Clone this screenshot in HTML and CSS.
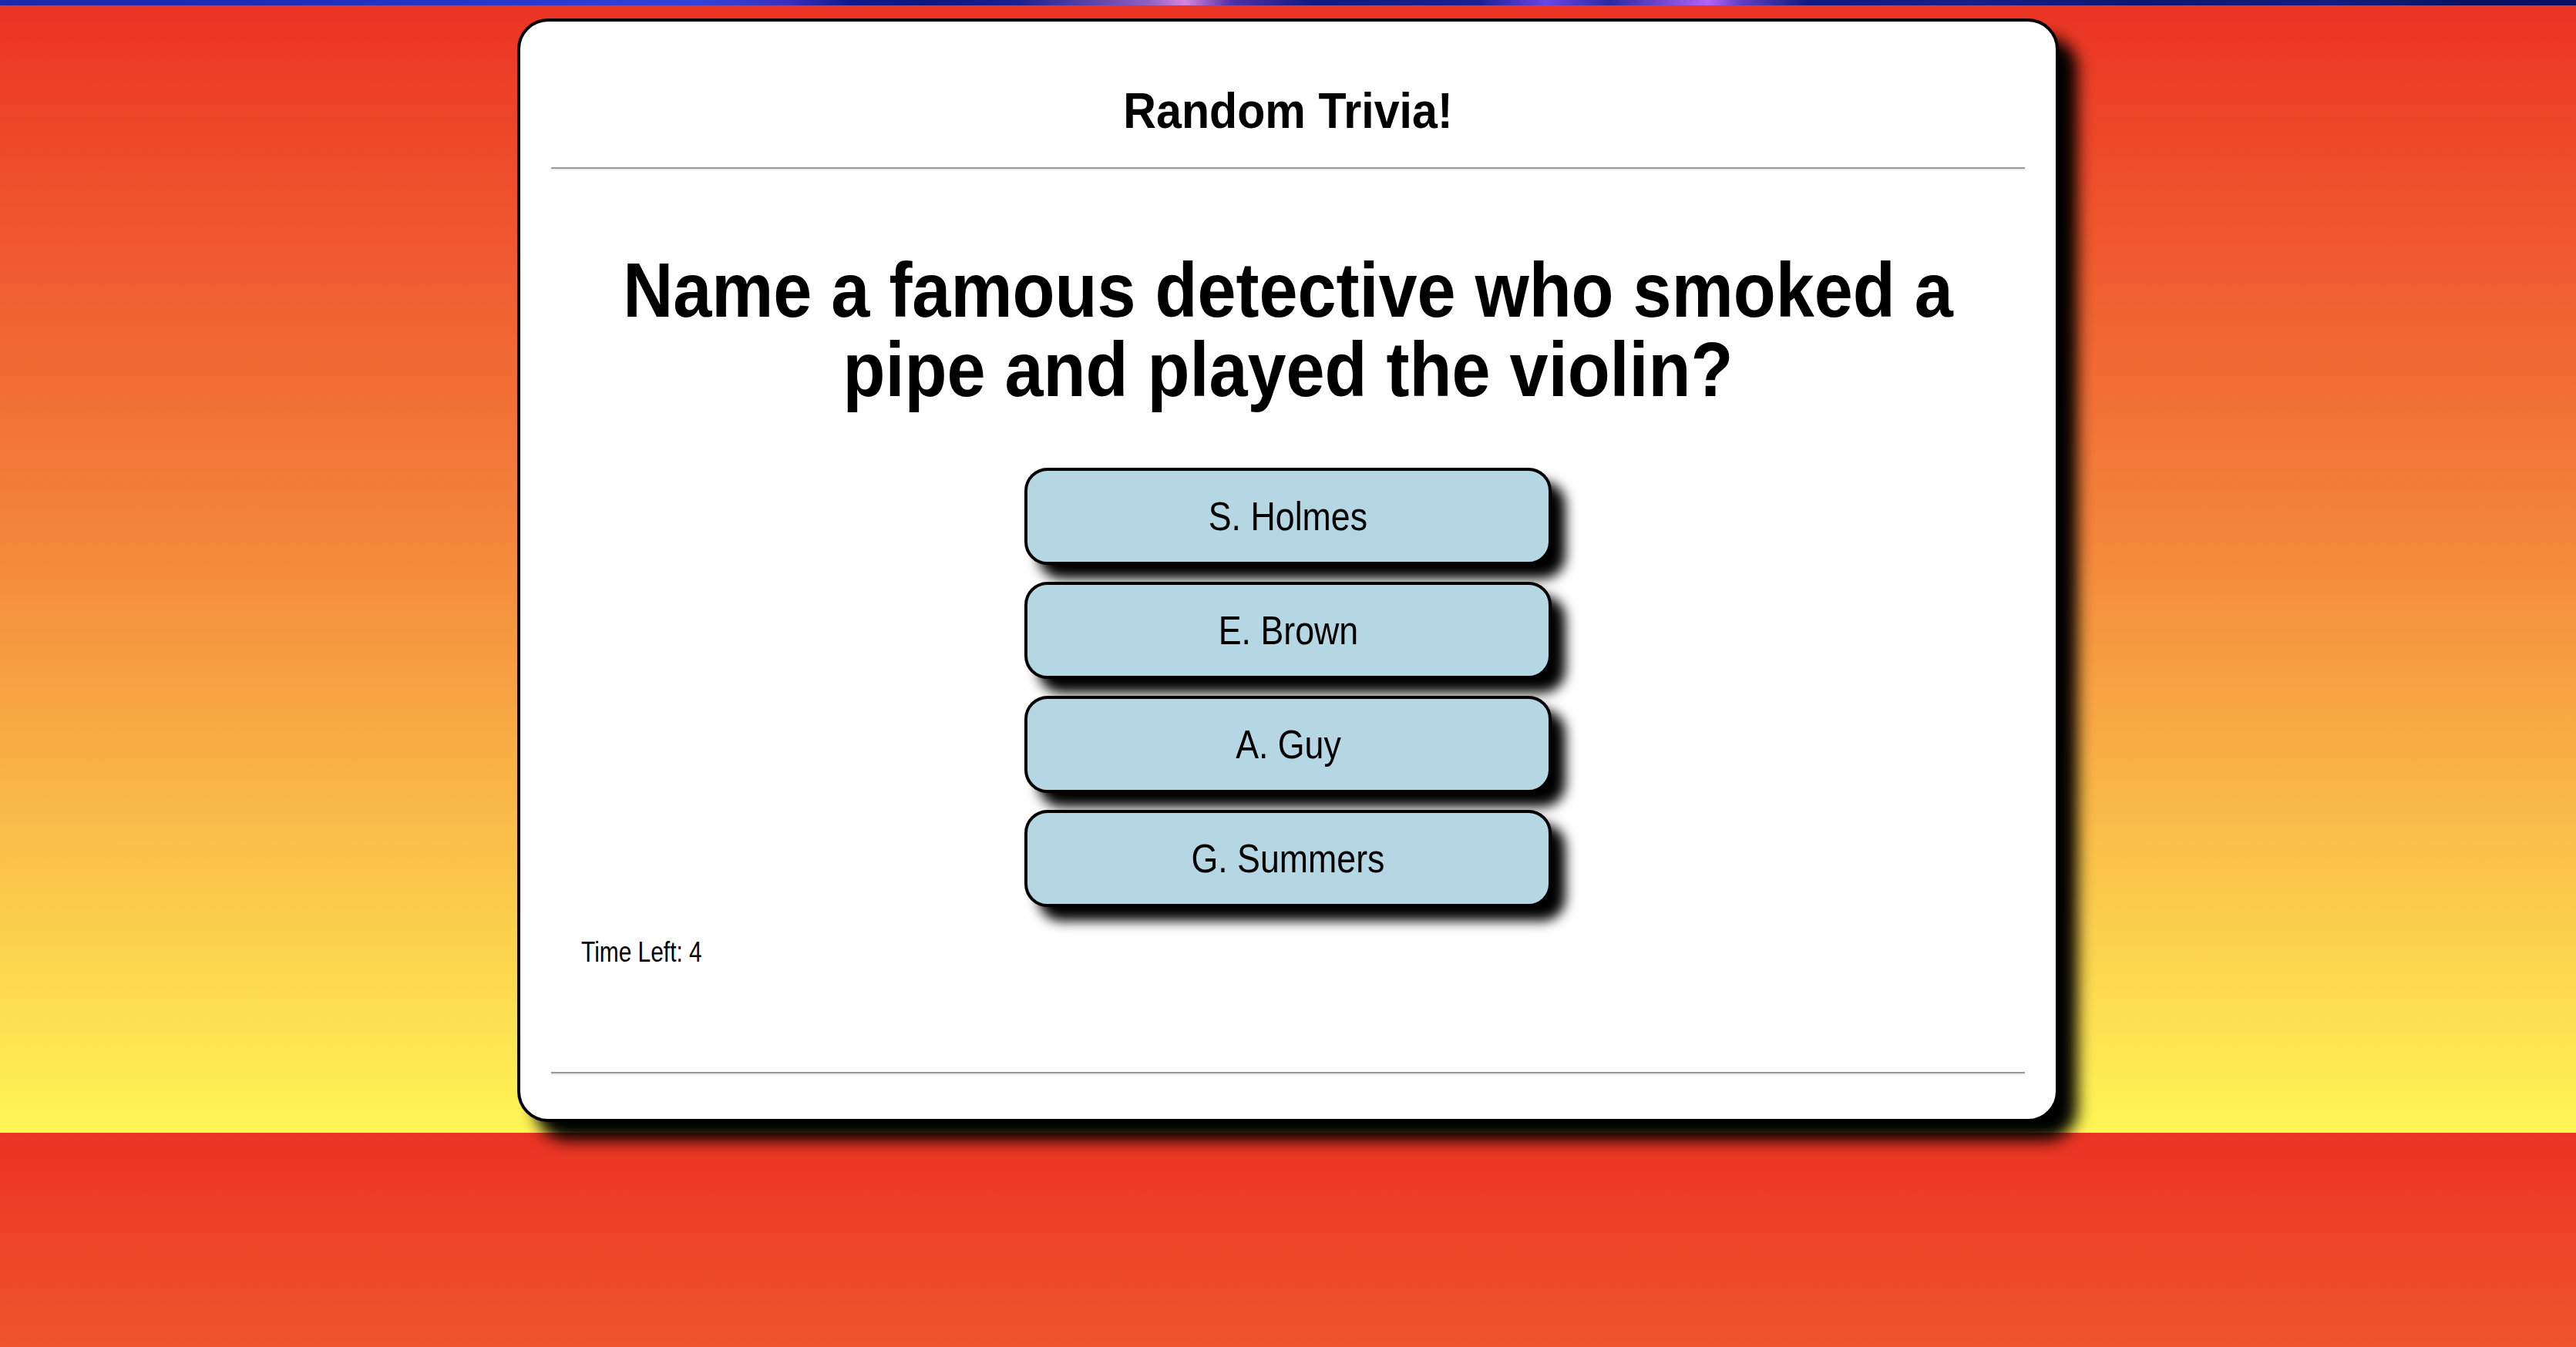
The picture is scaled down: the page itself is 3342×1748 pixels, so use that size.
FILE: index.html
```html
<!DOCTYPE html>
<html lang="en">
<head>
<meta charset="utf-8">
<title>Random Trivia!</title>
<link rel="stylesheet" href="styles.css">
</head>
<body>
<div class="topbar"></div>
<main class="card">
  <h1 class="title">Random Trivia!</h1>
  <hr class="rule">
  <h2 class="question">Name a famous detective who smoked a pipe and played the violin?</h2>
  <div class="answers">
    <button class="answer"><span class="answer-label">S. Holmes</span></button>
    <button class="answer"><span class="answer-label">E. Brown</span></button>
    <button class="answer"><span class="answer-label">A. Guy</span></button>
    <button class="answer"><span class="answer-label">G. Summers</span></button>
  </div>
  <p class="timer"><span class="timer-label">Time Left: 4</span></p>
  <hr class="rule rule-bottom">
</main>
</body>
</html>
```

FILE: styles.css
```css
html {
  background: linear-gradient(to bottom, #eb3323 0%, #f3813a 45%, #fff655 100%) 0 0 / 100% 1470px repeat;
  min-height: 100%;
}

body {
  margin: 0;
  padding-bottom: 80px;
  font-family: "Liberation Sans", Arial, sans-serif;
  color: #000;
}

.topbar {
  height: 7px;
  background: linear-gradient(to right,
    #1b2aa6 0%, #1c2cb5 9%, #2a3bd0 22%, #3244d8 27%, #3a30c0 30.5%,
    #101a8a 33%, #0d1580 35.7%, #1a208f 39.5%, #9060c0 44.6%, #d884d8 46%,
    #5030a8 47.8%, #101a80 51%, #1a2090 57.4%, #6a46e6 60%, #2a2aa0 62.5%,
    #b462f2 66.3%, #6040c0 67.6%, #101a80 70.2%, #1a1e8a 76.5%, #0d1570 83%,
    #151d80 90.5%, #0a1260 95.6%, #0a1060 100%);
}

.card {
  box-sizing: border-box;
  width: 2000px;
  margin: 17px auto 0;
  padding: 0 40px 57px;
  background: #fff;
  border: 4px solid #000;
  border-radius: 40px;
  box-shadow: 24px 24px 20px #000;
  display: flex;
  flex-direction: column;
}

.title {
  margin: 78px 0 0;
  font-size: 65px;
  line-height: 75px;
  font-weight: 700;
  text-align: center;
  transform: scaleX(0.91);
}

.rule {
  width: 100%;
  margin: 36px 0 0;
  border: 0;
  border-top: 2px solid #9a9a9a;
  border-bottom: 2px solid #ececec;
  height: 0;
}

.question {
  align-self: center;
  width: 2000px;
  margin: 104px 0 0;
  font-size: 100px;
  line-height: 103px;
  font-weight: 700;
  text-align: center;
  transform: scaleX(0.9);
}

.answers {
  margin-top: 76px;
  display: flex;
  flex-direction: column;
  align-items: center;
  gap: 22px;
}

.answer {
  box-sizing: border-box;
  width: 684px;
  height: 126px;
  padding: 0;
  background: #b4d7e3;
  border: 4px solid #000;
  border-radius: 30px;
  box-shadow: 18px 18px 16px #000;
  font-family: inherit;
  font-size: 52px;
  color: #000;
  text-align: center;
  cursor: pointer;
}

.answer-label {
  display: inline-block;
  transform: scaleX(0.86);
}

.timer {
  margin: 38px 0 0 39px;
  font-size: 36px;
  line-height: 41px;
}

.timer-label {
  display: inline-block;
  transform: scaleX(0.83);
  transform-origin: left center;
}

.rule-bottom {
  margin-top: 135px;
}
```
